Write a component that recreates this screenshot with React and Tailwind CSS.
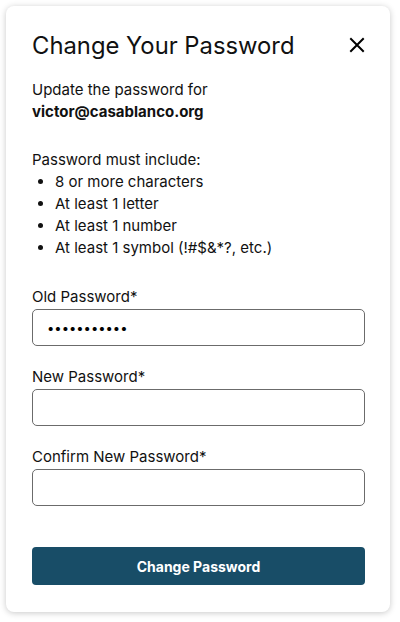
import React from "react";

const Field = ({ label, value, className }) => (
  <div className={className}>
    <label className="block text-[15px] leading-[22px] mb-[1px] text-[#111]">{label}</label>
    <input
      type="password"
      readOnly
      value={value}
      className="w-full h-[37px] px-[14px] rounded-[5px] border border-[#6b6b6b] bg-white text-[13px] text-black outline-none"
    />
  </div>
);

export default function App() {
  return (
    <div className="min-h-[622px] w-[400px] bg-white font-['Inter',_sans-serif] pt-[6px] pl-[6px]">
      <div className="w-[384px] h-[606px] rounded-[8px] bg-white shadow-[0_1px_6px_rgba(0,0,0,0.22)] pt-[24px] pl-[26px] pr-[25px]">
        <div className="flex items-center justify-between h-[32px]">
          <h2 className="text-[23.8px] leading-[32px] text-[#111]">Change Your Password</h2>
          <button className="w-[16px] h-[16px] mb-[2px] text-black">
            <svg viewBox="0 0 16 16" width="16" height="16" fill="none" stroke="currentColor" strokeWidth="2" strokeLinecap="square">
              <path d="M2 2L14 14M14 2L2 14" />
            </svg>
          </button>
        </div>

        <p className="mt-[17px] text-[15px] leading-[22px] text-[#111]">
          Update the password for
          <br />
          <span className="font-bold">victor@casablanco.org</span>
        </p>

        <div className="mt-[26px] text-[15px] leading-[22px] text-[#111]">
          <p>Password must include:</p>
          <ul className="list-disc pl-[23px]">
            <li>8 or more characters</li>
            <li>At least 1 letter</li>
            <li>At least 1 number</li>
            <li>At least 1 symbol (!#$&amp;*?, etc.)</li>
          </ul>
        </div>

        <Field className="mt-[27px]" label="Old Password*" value="abcdefghijk" />
        <Field className="mt-[20px]" label="New Password*" value="" />
        <Field className="mt-[20px]" label="Confirm New Password*" value="" />

        <button className="mt-[41px] w-full h-[38px] rounded-[4px] bg-[#184d67] text-white text-[14px] font-bold">
          Change Password
        </button>
      </div>
    </div>
  );
}
